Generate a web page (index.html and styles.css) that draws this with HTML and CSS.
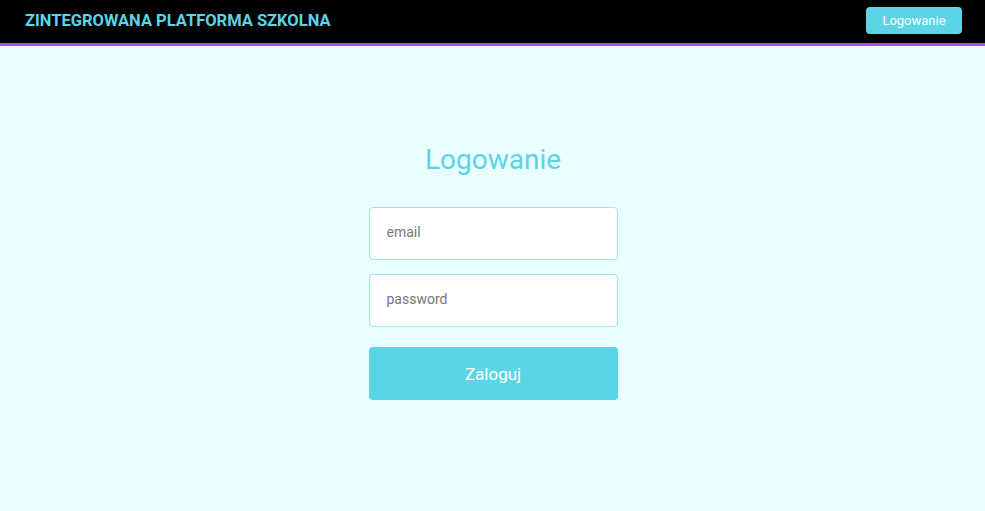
FILE: index.html
```html
<!DOCTYPE html>
<html lang="pl">
<head>
<meta charset="utf-8">
<title>Logowanie</title>
<link rel="stylesheet" href="styles.css">
</head>
<body>
<header class="topbar">
  <div class="brand">ZINTEGROWANA PLATFORMA SZKOLNA</div>
  <button class="nav-btn">Logowanie</button>
</header>
<main class="content">
  <form class="login">
    <h1 class="login-title">Logowanie</h1>
    <input class="field" type="text" placeholder="email">
    <input class="field field-pass" type="password" placeholder="password">
    <button class="submit" type="button">Zaloguj</button>
  </form>
</main>
</body>
</html>
```
FILE: styles.css
```css
* { box-sizing: border-box; }
html, body { margin: 0; padding: 0; }
body {
  font-family: Roboto, "Liberation Sans", sans-serif;
  background: #eafdff;
  height: 511px;
}
.topbar {
  height: 46px;
  background: #000;
  border-bottom: 3px solid #9b59e6;
  display: flex;
  align-items: center;
  justify-content: space-between;
  padding: 0 23px 2px 25px;
}
.brand {
  color: #5bd5e5;
  font-weight: 700;
  font-size: 16.5px;
}
.nav-btn {
  background: #5bd5e5;
  color: #fff;
  border: none;
  border-radius: 4px;
  width: 96px;
  height: 27px;
  font-family: inherit;
  font-size: 13px;
  padding: 0;
}
.content {
  display: flex;
  justify-content: center;
  padding-left: 1px;
}
.login {
  width: 249px;
  display: flex;
  flex-direction: column;
  margin-top: 97px;
}
.login-title {
  margin: 0 0 30px;
  text-align: center;
  font-weight: 400;
  font-size: 28px;
  line-height: 34px;
  color: #5bd5e5;
}
.field {
  height: 53px;
  border: 1px solid #9ee5ef;
  border-radius: 4px;
  background: #fff;
  padding: 0 17px 4px;
  font-family: inherit;
  font-size: 14px;
  color: #333;
  outline: none;
}
.field::placeholder { color: #777; }
.field-pass { margin-top: 14px; }
.submit {
  margin-top: 20px;
  height: 53px;
  border: none;
  border-radius: 4px;
  background: #5bd5e5;
  color: #fff;
  font-family: inherit;
  font-size: 17px;
}
```
